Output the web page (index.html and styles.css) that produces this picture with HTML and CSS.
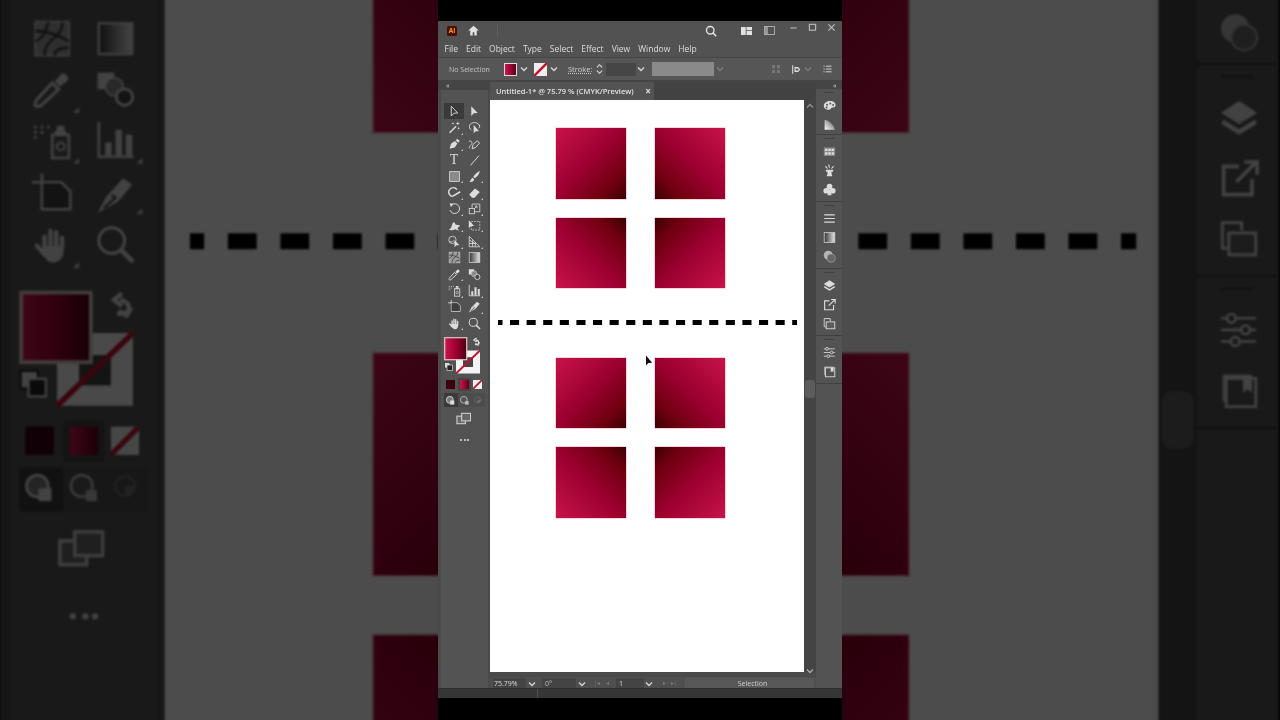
FILE: index.html
```html
<!DOCTYPE html>
<html lang="en">
<head>
<meta charset="UTF-8">
<title>Untitled-1* @ 75.79 % (CMYK/Preview)</title>
<link rel="stylesheet" href="styles.css">
</head>
<body>

<svg class="defs" width="0" height="0">
  <defs>
    <linearGradient id="g-tool"><stop offset="0" stop-color="#333"/><stop offset="1" stop-color="#e4e4e4"/></linearGradient>
    <linearGradient id="g-fill"><stop offset="0" stop-color="#d0134f"/><stop offset=".5" stop-color="#a00030"/><stop offset="1" stop-color="#4a0010"/></linearGradient>
    <linearGradient id="g-shape" x1="0" y1="1" x2="1" y2="0"><stop offset="0" stop-color="#fff"/><stop offset="1" stop-color="#555"/></linearGradient>

    <symbol id="i-select" viewBox="0 0 16 16"><path d="M4 1.5v12l3.2-3.4 4.8-.2z" fill="none" stroke="currentColor" stroke-width="1.1"/></symbol>
    <symbol id="i-direct" viewBox="0 0 16 16"><path d="M4 1.5v12l3.2-3.4 4.8-.2z" fill="currentColor"/></symbol>
    <symbol id="i-wand" viewBox="0 0 16 16"><path d="M2 14.5l8-8" stroke="currentColor" stroke-width="1.8"/><path d="M12 1v4M10 3h4M6 2v2M5 3h2M13 8v2M12 9h2" stroke="currentColor"/></symbol>
    <symbol id="i-lasso" viewBox="0 0 16 16"><path d="M4 11C1 9 1 5 4 3c3-2 8-1 10 2 1 2 0 3-1 4" fill="none" stroke="currentColor" stroke-width="1.2"/><path d="M7 5v10l2.5-2.5 4 .2z" fill="currentColor"/></symbol>
    <symbol id="i-pen" viewBox="0 0 16 16"><path d="M2 14.5l1.6-6.2L8.5 5l3 3-3.2 5z" fill="currentColor"/><path d="M9.5 4l2-2 3 3-2 2z" fill="currentColor"/></symbol>
    <symbol id="i-curve" viewBox="0 0 16 16"><path d="M1.5 14c0-5 5-4 3-8-1-2-3-2-3 0" fill="none" stroke="currentColor"/><path d="M5 14.5l1.2-5 5-5 3 3-5 5.5z" fill="none" stroke="currentColor" stroke-width="1.2"/></symbol>
    <symbol id="i-line" viewBox="0 0 16 16"><path d="M3 14L13.5 2" stroke="currentColor" stroke-width="1.2"/></symbol>
    <symbol id="i-rect" viewBox="0 0 16 16"><rect x="2" y="2" width="12" height="12" fill="#8a8a8a" stroke="currentColor"/></symbol>
    <symbol id="i-brush" viewBox="0 0 16 16"><path d="M14.5 1c-2 1-6 4-8 7.500l2 1.700c3-2 5.500-5 6-9.200zM5.500 9.500C3.500 10 4 13 1.500 14.500c3.500.5 6-.5 6-3.200z" fill="currentColor"/></symbol>
    <symbol id="i-shaper" viewBox="0 0 16 16"><path d="M11 4.500A5.500 5.500 0 1 0 6 13" fill="none" stroke="currentColor" stroke-width="1.8"/><path d="M6 12.500L15 7" stroke="currentColor" stroke-width="2"/></symbol>
    <symbol id="i-eraser" viewBox="0 0 16 16"><path d="M1.500 10.500L8.500 3l6 4.500-6.500 7H5z" fill="currentColor"/></symbol>
    <symbol id="i-rotate" viewBox="0 0 16 16"><path d="M4.500 3.500A6 6 0 1 1 2.500 10" fill="none" stroke="currentColor" stroke-width="1.2"/><path d="M2 1.500l5 .5-3.500 4z" fill="currentColor"/></symbol>
    <symbol id="i-scale" viewBox="0 0 16 16"><rect x="1.500" y="8" width="6.500" height="6.500" fill="none" stroke="currentColor"/><path d="M5 8V2.500h9.500V12H8" fill="none" stroke="currentColor"/><path d="M7 9l4-4M8.500 5H11v2.500" fill="none" stroke="currentColor"/></symbol>
    <symbol id="i-warp" viewBox="0 0 16 16"><path d="M1 13c2-1 3-2 3.500-4C5 6 6 4 8 4l1.500 3c2 0 3 .5 5.500 1-1 1.500-2 2-3.500 3 .5 1 1.500 2 2 3-2 0-3.500-1-5-1.500-2 1-5.500 2-7.500.5z" fill="currentColor"/></symbol>
    <symbol id="i-free" viewBox="0 0 16 16"><rect x="4" y="3" width="10.500" height="10.500" fill="none" stroke="currentColor" stroke-dasharray="2 1.500"/><path d="M1 1.500v10l2.800-2.800 3.800-.2z" fill="currentColor"/></symbol>
    <symbol id="i-builder" viewBox="0 0 16 16"><circle cx="5.500" cy="6" r="4.500" fill="none" stroke="currentColor"/><path d="M1.500 8c2 1 4 .5 5.500-1" stroke="currentColor" fill="none"/><path d="M8 6v9l2.300-2.300 3.700 0z" fill="currentColor"/></symbol>
    <symbol id="i-persp" viewBox="0 0 16 16"><path d="M1.500 1.500v13h13zM1.500 6l7 4.500M1.500 10.500h8M5.500 6.500v8M9 10v4.500" fill="none" stroke="currentColor"/></symbol>
    <symbol id="i-mesh" viewBox="0 0 16 16"><rect x="1.500" y="1.500" width="13" height="13" fill="#9a9a9a" stroke="#bbb"/><path d="M1.500 9c3-1 4-4 5-7.500M1.500 5c4 0 7 1 13 4M5 14.500c0-3 1-5 4-7 2-2 3-3 3-6M9 14.500c0-2 2-3 5.500-3" fill="none" stroke="#333" stroke-width=".9"/></symbol>
    <symbol id="i-grad" viewBox="0 0 16 16"><rect x="1.500" y="2" width="13" height="12" fill="url(#g-tool)" stroke="#ccc"/></symbol>
    <symbol id="i-drop" viewBox="0 0 16 16"><path d="M1.500 14.500c-.5-1 0-1.500.5-2.500l6-6.500 2.500 2.500-6.500 6c-1 .5-1.500 1-2.500.5z" fill="none" stroke="currentColor" stroke-width="1.200"/><path d="M9 5l2.500-3c1-1 3.500 1 2.500 2.500L11 7z" fill="currentColor"/></symbol>
    <symbol id="i-blend" viewBox="0 0 16 16"><rect x="1" y="1.500" width="6.500" height="6.500" fill="currentColor"/><circle cx="7.500" cy="7" r="3.500" fill="#8a8a8a" stroke="currentColor" stroke-width=".6"/><circle cx="11.500" cy="11" r="3.200" fill="#444" stroke="currentColor" stroke-width="1.100"/></symbol>
    <symbol id="i-spray" viewBox="0 0 16 16"><rect x="8" y="6" width="6.500" height="9" fill="#555" stroke="currentColor"/><path d="M9 6V4.500h4.500V6" fill="currentColor"/><rect x="9.800" y="2.500" width="3" height="2" fill="currentColor"/><circle cx="11.300" cy="10.500" r="1.500" fill="none" stroke="currentColor" stroke-width=".8"/><path d="M1 3h1M3.500 3h1M6 3h1M1 5h1M3.500 5h1M1 7h1" stroke="currentColor" stroke-width="1.100"/></symbol>
    <symbol id="i-graph" viewBox="0 0 16 16"><path d="M1.500 1v13.500h13.500" fill="none" stroke="currentColor"/><path d="M4 9h2.500v5H4zM8 4h2.500v10H8zM12 6h2.500v8H12z" fill="currentColor"/></symbol>
    <symbol id="i-artboard" viewBox="0 0 16 16"><path d="M0 3.500h4M4 0v14h11V7l-3.500-3.500H2.500" fill="none" stroke="currentColor"/><path d="M4.500 4h6.500l3.500 3.500V13.500h-10z" fill="#3e3e3e"/></symbol>
    <symbol id="i-slice" viewBox="0 0 16 16"><path d="M1 15.500L4.500 9 11 2l3.500 2.500L9 11z" fill="currentColor"/><path d="M3.500 13.500L8 9.500l-1.500-1" fill="none" stroke="#444" stroke-width=".9"/></symbol>
    <symbol id="i-hand" viewBox="0 0 16 16"><path d="M5 9.500V5M7.300 8V2.800M9.500 8V3.200M11.800 9V5.500M2 8.500l3 3.500" stroke="currentColor" stroke-width="1.700" stroke-linecap="round" fill="none"/><path d="M4.500 8.500h8c.2 3-.5 6.500-4 6.500-2.500 0-3.500-2-4-3.500z" fill="currentColor"/></symbol>
    <symbol id="i-zoom" viewBox="0 0 16 16"><circle cx="6.500" cy="6.500" r="5" fill="none" stroke="currentColor" stroke-width="1.200"/><path d="M10 10l4.800 4.800" stroke="currentColor" stroke-width="1.800"/></symbol>

    <symbol id="i-wells" viewBox="0 0 44 41">
      <path d="M31 7.500l3.500-.5c.8-2.500-.5-3.500-2.500-4M32.500 1L30 3l2.500 2M35.500 5.500L34 8l-2.500-1.500" fill="none" stroke="#ddd" stroke-width="1.400"/>
      <path d="M.5 25.500h5.500v5.500H.5z" fill="#ddd" stroke="#222" stroke-width=".7"/><path d="M3 28h5.500v5.500H3z" fill="#222" stroke="#ddd" stroke-width=".7"/>
      <path d="M12 13.500h24v23H12zM19 20.500v9.500h10v-9.500z" fill="#f3f3f3" fill-rule="evenodd"/>
      <rect x="19" y="20.500" width="10" height="9.500" fill="#444"/>
      <path d="M12 36.500L36 13.500" stroke="#c0102f" stroke-width="1.800"/>
      <rect x=".7" y=".7" width="22" height="22" fill="url(#g-fill)" stroke="#e0c8c8" stroke-width="1.200"/>
    </symbol>

    <symbol id="i-none" viewBox="0 0 16 16"><rect width="16" height="16" fill="#eee"/><path d="M0 16L16 0" stroke="#c0102f" stroke-width="3"/></symbol>
    <symbol id="i-draw-normal" viewBox="0 0 16 16"><circle cx="7" cy="7" r="5" fill="#777" stroke="#ddd" stroke-width="1.300"/><rect x="7.500" y="8" width="6" height="6" fill="#ddd"/></symbol>
    <symbol id="i-draw-back" viewBox="0 0 16 16"><circle cx="7" cy="7" r="5" fill="#555" stroke="#bbb" stroke-width="1.300"/><rect x="9" y="9" width="5" height="5" fill="#bbb"/></symbol>
    <symbol id="i-draw-in" viewBox="0 0 16 16"><circle cx="8" cy="7" r="4.500" fill="none" stroke="#707070"/><path d="M8 7h4.500A4.500 4.500 0 0 1 8 11.500z" fill="#707070"/></symbol>
    <symbol id="i-screen" viewBox="0 0 16 16"><rect x="1" y="5.500" width="9" height="8" fill="#666" stroke="#ccc" stroke-width="1.200"/><rect x="6" y="2.500" width="9.500" height="8" fill="#666" stroke="#ccc" stroke-width="1.200"/></symbol>

    <symbol id="r-palette" viewBox="0 0 16 16"><path d="M1 9c-.5-4 4-6.500 8-6.500 3.500 0 6.500 2 6.500 5s-2 3-4 3c-1.500 0-1.500 2-3 2.500C5 14 1.500 12.500 1 9z" fill="currentColor"/><circle cx="5" cy="7" r="1.200" fill="#555"/><circle cx="9" cy="5.500" r="1.200" fill="#555"/><circle cx="12.500" cy="7.500" r="1.200" fill="#555"/><circle cx="4.500" cy="10.500" r="1.200" fill="#555"/></symbol>
    <symbol id="r-shape" viewBox="0 0 16 16"><path d="M2 14.500V2c6 1 11 6 12.500 12.500z" fill="url(#g-shape)"/></symbol>
    <symbol id="r-swatches" viewBox="0 0 16 16"><rect x="1" y="3" width="14" height="10.500" fill="#888"/><path d="M2.500 4.500h3v3h-3zM6.500 4.500h3v3h-3zM10.500 4.500h3v3h-3zM2.500 9h3v3h-3zM6.500 9h3v3h-3zM10.500 9h3v3h-3z" fill="#ddd"/></symbol>
    <symbol id="r-brushes" viewBox="0 0 16 16"><path d="M7 0c1.500 1.500 1.500 4 1 5.500C7 4 6 2 7 0zM2.500 2c2 .5 3 2 3.500 4C4 5.500 3 4 2.500 2zM13.500 2c-.5 2-1.500 3.500-3.500 4 .5-2 1.500-3.500 3.500-4z" fill="currentColor"/><path d="M3.500 7h9v2.500h-2V12l1 3h-7l1-3V9.500h-2z" fill="currentColor"/></symbol>
    <symbol id="r-club" viewBox="0 0 16 16"><circle cx="8" cy="4.500" r="3.500" fill="currentColor"/><circle cx="4" cy="9.500" r="3.500" fill="currentColor"/><circle cx="12" cy="9.500" r="3.500" fill="currentColor"/><path d="M7 8h2l1.500 7h-5z" fill="currentColor"/></symbol>
    <symbol id="r-lines" viewBox="0 0 16 16"><path d="M1.500 3.500h13M1.500 8h13M1.500 12.500h13" stroke="currentColor" stroke-width="1.500"/></symbol>
    <symbol id="r-trans" viewBox="0 0 16 16"><circle cx="6.500" cy="6.500" r="5.500" fill="#b5b5b5"/><circle cx="10" cy="10" r="5" fill="#666" stroke="#aaa" stroke-width=".8"/></symbol>
    <symbol id="r-layers" viewBox="0 0 16 16"><path d="M8 1.500L15 6 8 10.500 1 6z" fill="currentColor"/><path d="M1.500 9.500L8 13.500l6.500-4" fill="none" stroke="currentColor" stroke-width="1.800"/></symbol>
    <symbol id="r-export" viewBox="0 0 16 16"><path d="M8 3.500H2v11h11V8.500" fill="none" stroke="currentColor" stroke-width="1.400"/><path d="M7 9.500l7-7M10 1.800h5v5" fill="none" stroke="currentColor" stroke-width="1.400"/></symbol>
    <symbol id="r-copy" viewBox="0 0 16 16"><path d="M3.500 12H1.500V2H9v3" fill="none" stroke="currentColor" stroke-width="1.100"/><rect x="4" y="6" width="10.500" height="8.500" fill="#5c5c5c" stroke="currentColor" stroke-width="1.100"/></symbol>
    <symbol id="r-sliders" viewBox="0 0 16 16"><path d="M1 3.500h13.500M1 8h13.500M1 12.500h13.500" stroke="currentColor"/><circle cx="5" cy="3.500" r="1.700" fill="#555" stroke="currentColor"/><circle cx="10.500" cy="8" r="1.700" fill="#555" stroke="currentColor"/><circle cx="6.500" cy="12.500" r="1.700" fill="#555" stroke="currentColor"/></symbol>
    <symbol id="r-book" viewBox="0 0 16 16"><path d="M2 12.500V2.500h11" fill="none" stroke="currentColor" stroke-width=".8"/><rect x="3" y="3.500" width="11.500" height="11" fill="none" stroke="currentColor" stroke-width="1.100"/><path d="M9.500 3.500h3.500v5.500l-1.700-1.200L9.500 9z" fill="currentColor"/></symbol>

    <symbol id="i-caret" viewBox="0 0 8 8"><path d="M1 2.500L4 5.500 7 2.500" fill="none" stroke="currentColor" stroke-width="1.300"/></symbol>
  </defs>
</svg>

<!-- dimmed, enlarged copy of the document behind the window -->
<div class="backdrop">
  <div class="ghost">
    <div class="workspace">
      <div class="left-col">
        <div class="tools tools-ghost">
          <div class="tool-grid">
            <div class="tool"><svg><use href="#i-mesh"/></svg></div>
            <div class="tool"><svg><use href="#i-grad"/></svg></div>
            <div class="tool more"><svg><use href="#i-drop"/></svg></div>
            <div class="tool"><svg><use href="#i-blend"/></svg></div>
            <div class="tool more"><svg><use href="#i-spray"/></svg></div>
            <div class="tool more"><svg><use href="#i-graph"/></svg></div>
            <div class="tool"><svg><use href="#i-artboard"/></svg></div>
            <div class="tool more"><svg><use href="#i-slice"/></svg></div>
            <div class="tool more"><svg><use href="#i-hand"/></svg></div>
            <div class="tool"><svg><use href="#i-zoom"/></svg></div>
          </div>
          <svg class="wells"><use href="#i-wells"/></svg>
          <div class="mini-row">
            <div class="mini"><i class="swatch-black"></i></div>
            <div class="mini"><i class="swatch-grad"></i></div>
            <div class="mini"><svg><use href="#i-none"/></svg></div>
          </div>
          <div class="mode-row">
            <div class="mode on"><svg><use href="#i-draw-normal"/></svg></div>
            <div class="mode"><svg><use href="#i-draw-back"/></svg></div>
            <div class="mode"><svg><use href="#i-draw-in"/></svg></div>
          </div>
          <svg class="screen-mode"><use href="#i-screen"/></svg>
          <div class="dots"><i></i><i></i><i></i></div>
        </div>
      </div>
      <div class="doc">
        <div class="tabs"></div>
        <div class="canvas-row">
          <div class="canvas">
            <div class="squares">
              <div class="sq to-br"></div><div class="sq to-bl"></div>
              <div class="sq to-tr"></div><div class="sq to-tl"></div>
            </div>
            <svg class="dash"><line x1="0" y1="2.500" x2="299" y2="2.500"/></svg>
            <div class="squares">
              <div class="sq to-br"></div><div class="sq to-bl"></div>
              <div class="sq to-tr"></div><div class="sq to-tl"></div>
            </div>
          </div>
          <div class="vscroll"><div class="thumb"></div></div>
        </div>
      </div>
      <div class="rail rail-ghost">
        <div class="rail-group cut"><div class="rail-icon"><svg><use href="#r-trans"/></svg></div></div>
        <div class="rail-group">
          <div class="rail-icon"><svg><use href="#r-layers"/></svg></div>
          <div class="rail-icon"><svg><use href="#r-export"/></svg></div>
          <div class="rail-icon"><svg><use href="#r-copy"/></svg></div>
        </div>
        <div class="rail-group">
          <div class="rail-icon"><svg><use href="#r-sliders"/></svg></div>
          <div class="rail-icon"><svg><use href="#r-book"/></svg></div>
        </div>
      </div>
    </div>
  </div>
</div>

<div class="app-col">
<div class="app">
  <div class="titlebar">
    <div class="ai-logo">Ai</div>
    <svg class="home" viewBox="0 0 16 16"><path d="M8 2L1.500 8H4v6h3v-4h2v4h3V8h2.500z" fill="currentColor"/></svg>
    <div class="title-sep"></div>
    <svg class="search" viewBox="0 0 16 16"><circle cx="7" cy="7" r="5" fill="none" stroke="currentColor" stroke-width="1.800"/><path d="M10.500 10.500L15 15" stroke="currentColor" stroke-width="2"/></svg>
    <svg class="ws-a" viewBox="0 0 14 10"><path d="M0 0h6v10H0zM7 0h7v4H7zM7 5h7v5H7z" fill="currentColor"/></svg>
    <svg class="ws-b" viewBox="0 0 14 12"><rect x=".5" y=".5" width="13" height="11" fill="none" stroke="currentColor"/><rect x="1" y="1" width="4" height="10" fill="currentColor" opacity=".6"/></svg>
    <svg class="win win-min" viewBox="0 0 10 10"><path d="M1.500 5.500h7" stroke="currentColor" stroke-width="1.200"/></svg>
    <svg class="win" viewBox="0 0 10 10"><rect x="1.500" y="1.500" width="7" height="6.500" fill="none" stroke="currentColor" stroke-width="1.200"/></svg>
    <svg class="win" viewBox="0 0 10 10"><path d="M1.500 1.500l7 7M8.500 1.500l-7 7" stroke="currentColor" stroke-width="1.200"/></svg>
  </div>

  <div class="menubar">
    <span>File</span><span>Edit</span><span>Object</span><span>Type</span><span>Select</span><span>Effect</span><span>View</span><span>Window</span><span>Help</span>
  </div>

  <div class="controlbar">
    <span class="no-sel">No Selection</span>
    <i class="cb-fill"></i>
    <svg class="caret cb-c1"><use href="#i-caret"/></svg>
    <svg class="cb-stroke"><use href="#i-none"/></svg>
    <svg class="caret cb-c2"><use href="#i-caret"/></svg>
    <span class="stroke-label">Stroke:</span>
    <svg class="spin" viewBox="0 0 8 14"><path d="M1 5l3-3 3 3M1 9l3 3 3-3" fill="none" stroke="currentColor" stroke-width="1.200"/></svg>
    <div class="cb-field"></div>
    <svg class="caret cb-c3"><use href="#i-caret"/></svg>
    <div class="cb-gray"></div>
    <svg class="caret cb-c4"><use href="#i-caret"/></svg>
    <svg class="cb-grid" viewBox="0 0 10 10"><path d="M0 0h4v4H0zM6 0h4v4H6zM0 6h4v4H0zM6 6h4v4H6z" fill="#777"/></svg>
    <svg class="cb-align" viewBox="0 0 14 12"><path d="M1 0v12" stroke="currentColor" stroke-width="1.400"/><path d="M3.500 2.500h5l3 3.500-3 3.500h-5z" fill="currentColor"/><path d="M5 4.500h3l1.500 1.500L8 7.500H5z" fill="#535353"/></svg>
    <svg class="caret cb-c5"><use href="#i-caret"/></svg>
    <svg class="cb-list" viewBox="0 0 10 10"><path d="M0 1.500h1.500M3 1.500h7M0 5h1.500M3 5h7M0 8.500h1.500M3 8.500h7" stroke="currentColor" stroke-width="1.100"/></svg>
  </div>

  <div class="workspace">
    <div class="left-col">
      <div class="collapse">«</div>
      <div class="tools">
        <div class="tool-grid">
          <div class="tool active"><svg><use href="#i-select"/></svg></div>
          <div class="tool"><svg><use href="#i-direct"/></svg></div>
          <div class="tool more"><svg><use href="#i-wand"/></svg></div>
          <div class="tool"><svg><use href="#i-lasso"/></svg></div>
          <div class="tool more"><svg><use href="#i-pen"/></svg></div>
          <div class="tool"><svg><use href="#i-curve"/></svg></div>
          <div class="tool"><span class="type-t">T</span></div>
          <div class="tool"><svg><use href="#i-line"/></svg></div>
          <div class="tool more"><svg><use href="#i-rect"/></svg></div>
          <div class="tool more"><svg><use href="#i-brush"/></svg></div>
          <div class="tool more"><svg><use href="#i-shaper"/></svg></div>
          <div class="tool more"><svg><use href="#i-eraser"/></svg></div>
          <div class="tool more"><svg><use href="#i-rotate"/></svg></div>
          <div class="tool more"><svg><use href="#i-scale"/></svg></div>
          <div class="tool more"><svg><use href="#i-warp"/></svg></div>
          <div class="tool more"><svg><use href="#i-free"/></svg></div>
          <div class="tool more"><svg><use href="#i-builder"/></svg></div>
          <div class="tool more"><svg><use href="#i-persp"/></svg></div>
          <div class="tool"><svg><use href="#i-mesh"/></svg></div>
          <div class="tool"><svg><use href="#i-grad"/></svg></div>
          <div class="tool more"><svg><use href="#i-drop"/></svg></div>
          <div class="tool"><svg><use href="#i-blend"/></svg></div>
          <div class="tool more"><svg><use href="#i-spray"/></svg></div>
          <div class="tool more"><svg><use href="#i-graph"/></svg></div>
          <div class="tool"><svg><use href="#i-artboard"/></svg></div>
          <div class="tool more"><svg><use href="#i-slice"/></svg></div>
          <div class="tool more"><svg><use href="#i-hand"/></svg></div>
          <div class="tool"><svg><use href="#i-zoom"/></svg></div>
        </div>
        <svg class="wells"><use href="#i-wells"/></svg>
        <div class="mini-row">
          <div class="mini"><i class="swatch-black"></i></div>
          <div class="mini"><i class="swatch-grad"></i></div>
          <div class="mini"><svg><use href="#i-none"/></svg></div>
        </div>
        <div class="mode-row">
          <div class="mode on"><svg><use href="#i-draw-normal"/></svg></div>
          <div class="mode"><svg><use href="#i-draw-back"/></svg></div>
          <div class="mode"><svg><use href="#i-draw-in"/></svg></div>
        </div>
        <svg class="screen-mode"><use href="#i-screen"/></svg>
        <div class="dots"><i></i><i></i><i></i></div>
      </div>
    </div>

    <div class="doc">
      <div class="tabs">
        <div class="tab"><span>Untitled-1* @ 75.79 % (CMYK/Preview)</span><b>×</b></div>
      </div>
      <div class="canvas-row">
        <div class="canvas">
          <div class="squares">
            <div class="sq to-br"></div><div class="sq to-bl"></div>
            <div class="sq to-tr"></div><div class="sq to-tl"></div>
          </div>
          <svg class="dash"><line x1="0" y1="2.500" x2="299" y2="2.500"/></svg>
          <div class="squares">
            <div class="sq to-br"></div><div class="sq to-bl"></div>
            <div class="sq to-tr"></div><div class="sq to-tl"></div>
          </div>
          <svg class="cursor" viewBox="0 0 8 12"><path d="M1 .5v10l2.400-2.600 3.800-.2z" fill="#111"/></svg>
        </div>
        <div class="vscroll">
          <svg class="caret up"><use href="#i-caret"/></svg>
          <div class="thumb"></div>
          <svg class="caret down"><use href="#i-caret"/></svg>
        </div>
      </div>
      <div class="hscroll"></div>
      <div class="statusbar">
        <div class="st-field st-zoom">75.79%</div>
        <svg class="caret st-c1"><use href="#i-caret"/></svg>
        <div class="st-field st-angle">0°</div>
        <svg class="caret st-c2"><use href="#i-caret"/></svg>
        <span class="st-nav st-n1">|◂</span><span class="st-nav">◂</span>
        <div class="st-field st-page">1</div>
        <svg class="caret st-c3"><use href="#i-caret"/></svg>
        <span class="st-nav st-n2">▸</span><span class="st-nav">▸|</span>
        <div class="st-tool">Selection</div>
      </div>
    </div>

    <div class="rail">
      <div class="collapse right">«</div>
      <div class="rail-group first">
        <div class="rail-icon"><svg><use href="#r-palette"/></svg></div>
        <div class="rail-icon"><svg><use href="#r-shape"/></svg></div>
      </div>
      <div class="rail-group">
        <div class="rail-icon"><svg><use href="#r-swatches"/></svg></div>
        <div class="rail-icon"><svg><use href="#r-brushes"/></svg></div>
        <div class="rail-icon"><svg><use href="#r-club"/></svg></div>
      </div>
      <div class="rail-group">
        <div class="rail-icon"><svg><use href="#r-lines"/></svg></div>
        <div class="rail-icon"><svg><use href="#i-grad"/></svg></div>
        <div class="rail-icon"><svg><use href="#r-trans"/></svg></div>
      </div>
      <div class="rail-group">
        <div class="rail-icon"><svg><use href="#r-layers"/></svg></div>
        <div class="rail-icon"><svg><use href="#r-export"/></svg></div>
        <div class="rail-icon"><svg><use href="#r-copy"/></svg></div>
      </div>
      <div class="rail-group">
        <div class="rail-icon"><svg><use href="#r-sliders"/></svg></div>
        <div class="rail-icon"><svg><use href="#r-book"/></svg></div>
      </div>
    </div>
  </div>

  <div class="bottom-strip"><i></i></div>
</div>
</div>

</body>
</html>
```

FILE: styles.css
```css
html, body { margin: 0; height: 100%; }
body { position: relative; background: #000; overflow: hidden; font-family: "Open Sans", "Liberation Sans", sans-serif; }
.defs { position: absolute; }
svg { display: block; overflow: visible; }

/* backdrop: same document, scaled up and dimmed */
.backdrop { position: absolute; left: 0; top: 0; width: 1280px; height: 720px; overflow: hidden; }
.ghost { position: absolute; left: 0; top: -713px; width: 404px; height: 677px; padding-top: 61px; box-sizing: border-box; transform: scale(3.165); transform-origin: 0 0; filter: brightness(.3) blur(.35px); }
.tools.tools-ghost { padding-top: 168.200px; height: 100%; }
.rail-ghost { padding-top: 165px; }

/* window */
.app-col { position: absolute; left: 438px; top: 0; width: 404px; height: 720px; background: #000; padding-top: 21px; box-sizing: border-box; }
.app { width: 404px; height: 677px; display: flex; flex-direction: column; background: #525252; color: #e2e2e2; filter: blur(.3px); }

.titlebar { height: 19px; display: flex; align-items: center; flex: none; }
.ai-logo { width: 10px; height: 10px; margin-left: 9px; background: #4a1006; color: #ff9a1a; border-radius: 1.500px; font: 700 6.500px/10px "Open Sans", sans-serif; text-align: center; }
.home { width: 13px; height: 13px; margin-left: 10px; }
.title-sep { width: 1px; height: 14px; background: #5c5c5c; margin-left: 17px; }
.search { width: 12px; height: 12px; margin-left: 207px; }
.ws-a { width: 11px; height: 8px; margin-left: 24px; }
.ws-b { width: 11px; height: 9px; margin-left: 12px; opacity: .8; }
.win { width: 9px; height: 9px; margin-top: -6px; margin-left: 10px; opacity: .75; }
.win-min { margin-left: 14px; }

.menubar { height: 16px; display: flex; align-items: center; gap: 8px; padding-left: 6.500px; font-size: 8.500px; color: #dedede; flex: none; }

.controlbar { height: 22px; margin-top: 1px; border-top: 1px solid #454545; border-bottom: 2px solid #454545; display: flex; align-items: center; flex: none; background: #565656; }
.no-sel { font-size: 7px; color: #c4c4c4; margin-left: 11px; width: 55px; white-space: nowrap; }
.cb-fill { width: 13px; height: 13px; background: linear-gradient(90deg, #d0134f, #5c0014); border: 1px solid #ddd; box-sizing: border-box; }
.caret { width: 8px; height: 8px; color: #d8d8d8; flex: none; }
.cb-c1 { margin-left: 3px; }
.cb-stroke { width: 13px; height: 13px; margin-left: 6px; }
.cb-c2 { margin-left: 3px; }
.stroke-label { font-size: 7.500px; color: #d0d0d0; margin-left: 10px; text-decoration: underline dotted; width: 26px; }
.spin { width: 7px; height: 12px; margin-left: 2px; }
.cb-field { width: 30px; height: 13px; background: #464646; margin-left: 3px; }
.cb-c3 { margin-left: 1px; }
.cb-gray { width: 62px; height: 14px; background: #8a8a8a; margin-left: 7px; }
.cb-c4 { margin-left: 2px; opacity: .3; }
.cb-grid { width: 8px; height: 8px; margin-left: 48px; }
.cb-align { width: 10px; height: 9px; margin-left: 12px; }
.cb-c5 { margin-left: 2px; opacity: .3; }
.cb-list { width: 9px; height: 8px; margin-left: 11px; }

.workspace { flex: 1; min-height: 0; display: flex; }
.left-col { width: 52px; flex: none; background: #4a4a4a; }
.collapse { height: 8px; font-size: 7px; line-height: 7px; color: #cfcfcf; padding-left: 8px; background: #454545; }
.collapse.right { height: 7px; padding-left: 17px; }
.tools { width: 47px; margin-left: 3px; padding-top: 13px; background: #535353; height: calc(100% - 8px); box-sizing: border-box; }

.tool-grid { display: grid; grid-template-columns: 20px 20px; grid-auto-rows: 16.300px; margin-left: 3px; }
.tool { position: relative; display: flex; align-items: center; justify-content: center; color: #dcdcdc; }
.tool svg { width: 13px; height: 13px; }
.tool.active { background: #3a3a3a; }
.tool.more::after { content: ""; position: absolute; right: 1px; bottom: 1px; border-left: 2.500px solid transparent; border-bottom: 2.500px solid #c8c8c8; }
.type-t { font: 14px/14px "Liberation Serif", serif; }

.wells { width: 44px; height: 41px; margin: 6px 0 0 3px; }
.mini-row, .mode-row { display: flex; margin-left: 3px; }
.mini { width: 13.500px; height: 13px; display: flex; align-items: center; justify-content: center; }
.mini:nth-child(2) { background: #444; }
.mini i, .mini svg { display: block; width: 9px; height: 9px; }
.swatch-black { background: #3a0010; }
.swatch-grad { background: linear-gradient(90deg, #d0134f, #5c0014); }
.mode-row { margin-top: 2px; }
.mode { width: 13.500px; height: 14px; display: flex; align-items: center; justify-content: center; background: #4c4c4c; }
.mode.on { background: #3a3a3a; }
.mode svg { width: 11px; height: 11px; }
.screen-mode { width: 15px; height: 15px; margin: 4px 0 0 15px; }
.dots { display: flex; gap: 1.500px; margin: 13px 0 0 19px; }
.dots i { width: 2px; height: 2px; border-radius: 50%; background: #ddd; }

.doc { width: 326px; flex: none; display: flex; flex-direction: column; background: #3f3f3f; }
.tabs { height: 18px; flex: none; background: #424242; }
.tab { width: 164px; height: 18px; box-sizing: border-box; background: #535353; padding: 0 3px 1px 6px; display: flex; align-items: center; justify-content: space-between; font-size: 7.500px; font-weight: 600; color: #e0e0e0; white-space: nowrap; }
.tab b { font-size: 10px; font-weight: 700; }

.canvas-row { height: 572px; display: flex; flex: none; }
.canvas { width: 314px; position: relative; background: #fff; padding-top: 28px; box-sizing: border-box; }
.squares { display: grid; grid-template-columns: 70px 70px; column-gap: 29px; row-gap: 19px; grid-auto-rows: 70.500px; margin-left: 66px; }
.sq { box-shadow: 0 0 0 .5px rgba(220, 80, 120, .5); }
.to-br { background: linear-gradient(135deg, #c8134a 0%, #9c0030 48%, #700010 80%, #3c0002 100%); }
.to-bl { background: linear-gradient(225deg, #c8134a 0%, #9c0030 48%, #700010 80%, #3c0002 100%); }
.to-tr { background: linear-gradient(45deg, #c8134a 0%, #9c0030 48%, #700010 80%, #3c0002 100%); }
.to-tl { background: linear-gradient(315deg, #c8134a 0%, #9c0030 48%, #700010 80%, #3c0002 100%); }
.dash { width: 299px; height: 5px; margin: 32px 0 32.500px 8px; }
.dash line { stroke: #000; stroke-width: 5; stroke-dasharray: 9.100 7.500; stroke-dashoffset: 4.600; }
.cursor { position: absolute; left: 155px; top: 255px; width: 8px; height: 12px; }

.vscroll { width: 12px; display: flex; flex-direction: column; align-items: center; background: #444; }
.vscroll .up { margin-top: 2px; transform: rotate(180deg); opacity: .5; }
.vscroll .thumb { width: 10px; height: 18px; margin-top: 270px; background: #5c5c5c; border-radius: 3px; }
.vscroll .down { margin-top: auto; margin-bottom: -3px; opacity: .7; }

.hscroll { height: 5px; flex: none; background: #4a4a4a; }
.statusbar { height: 11px; flex: none; display: flex; align-items: flex-end; font-size: 7px; color: #d8d8d8; background: #4f4f4f; }
.st-field { height: 10px; line-height: 11px; background: #444; box-sizing: border-box; padding-left: 1px; flex: none; }
.st-zoom { width: 33px; margin-left: 3px; }
.st-c1 { margin-left: 2px; }
.st-angle { width: 34px; margin-left: 6px; padding-left: 3px; color: #c0c0c0; }
.st-c2 { margin-left: 2px; }
.st-nav { width: 10px; text-align: center; font-size: 6px; line-height: 10px; color: #7a7a7a; flex: none; }
.st-n1 { margin-left: 6px; }
.st-page { width: 28px; margin-left: 4px; padding-left: 3px; }
.st-c3 { margin-left: 1px; }
.st-n2 { margin-left: 6px; }
.st-tool { width: 129px; margin-left: 6px; height: 10px; line-height: 11px; text-align: center; padding-left: 6px; box-sizing: border-box; background: #585858; color: #cfcfcf; }

.rail { width: 26px; flex: none; background: #535353; box-sizing: border-box; color: #dcdcdc; }
.rail-group { padding: 7px 0 2px; border-bottom: 1px solid #404040; position: relative; }
.rail-group::before { content: ""; position: absolute; left: 8px; top: 3px; width: 10px; height: 1px; background: #404040; }
.rail-group.first { padding-bottom: 0; }
.rail-group.cut { padding: 0; }
.rail-group.cut::before { display: none; }
.rail-icon { height: 19px; display: flex; align-items: center; justify-content: center; padding-left: 1px; }
.rail-icon svg { width: 13px; height: 13px; }

.bottom-strip { height: 10px; flex: none; background: #363636; border-top: 1px solid #2e2e2e; box-sizing: border-box; }
.bottom-strip i { display: block; width: 1px; height: 100%; margin-left: 99px; background: #505050; }
```
